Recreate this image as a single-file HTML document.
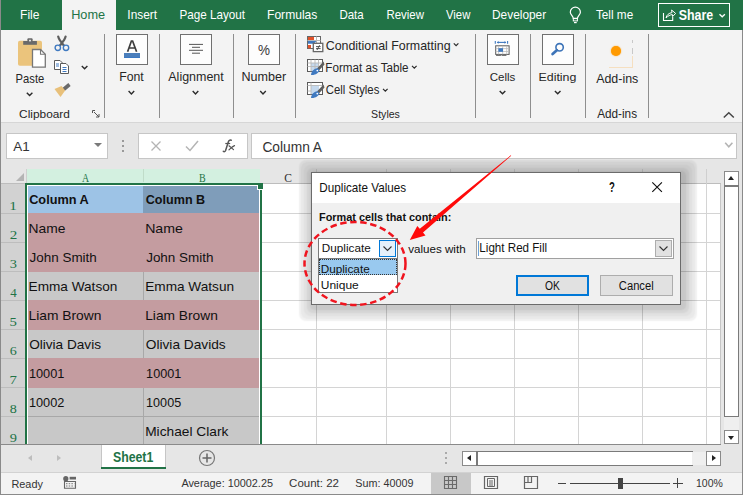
<!DOCTYPE html>
<html><head><meta charset="utf-8">
<style>
*{margin:0;padding:0;box-sizing:border-box}
html,body{width:743px;height:495px;overflow:hidden;background:#f3f3f3;font-family:"Liberation Sans",sans-serif;position:relative}
.a{position:absolute}
.t{position:absolute;white-space:nowrap;line-height:1}
.tab{color:#fff;font-size:13px;top:9px}
.rl{color:#262626;font-size:12.5px}
.box{position:absolute;border:1px solid #707070;background:#fdfdfd}
.sep{position:absolute;top:34px;height:84px;width:1px;background:#8e8e8e}
.chev{position:absolute;width:4px;height:4px;border-right:1.4px solid #2a2a2a;border-bottom:1.4px solid #2a2a2a;transform:rotate(45deg)}
.cell{position:absolute;font-size:12.6px;color:#111;white-space:nowrap;line-height:1}
.hl{position:absolute;background:#d4d4d4}
.vl{position:absolute;background:#d4d4d4}
.rn{position:absolute;color:#217346;font-family:"Liberation Serif",serif;font-size:13px;line-height:1;width:26px;text-align:center}
</style></head><body>
<!-- outer left border -->
<div class="a" style="left:0;top:0;width:1px;height:495px;background:#8a8a8a;z-index:50"></div>
<div class="a" style="left:0;top:494px;width:743px;height:1px;background:#8a8a8a;z-index:50"></div>

<!-- title / tabs bar -->
<div class="a" style="left:0;top:0;width:743px;height:30px;background:#217346"></div>
<div class="a" style="left:62px;top:0;width:54px;height:30px;background:#f3f3f3"></div>
<svg class="a" style="left:566px;top:4px" width="18" height="20" viewBox="0 0 18 20"><path d="M7.3 14.3 C7 12 4.3 10.5 4.3 8.2 A5.05 5.05 0 0 1 14.4 8.2 C14.4 10.5 11.7 12 11.4 14.3 Z" fill="none" stroke="#fff" stroke-width="1.2"/><rect x="7.3" y="14.6" width="4.1" height="2.3" fill="none" stroke="#fff" stroke-width="1"/><path d="M8 18.6 H10.7" stroke="#fff" stroke-width="1.2"/></svg>
<div class="a" style="left:658px;top:3px;width:72px;height:24px;border:1px solid #fff"></div>
<svg class="a" style="left:662px;top:7px" width="15" height="15" viewBox="0 0 15 15"><path d="M1.5 6 V13.5 H10.7 V10" fill="none" stroke="#fff" stroke-width="1.1"/><path d="M4 11 C4.5 8 7 6 10 5.6 L9.6 3 L13.6 6.4 L10.6 9.6 L10.4 7.6 C8 7.8 6 9 4 11 Z" fill="none" stroke="#fff" stroke-width="1"/></svg>
<svg class="a" style="left:716px;top:10px" width="12" height="10" viewBox="0 0 12 10"><path d="M3.5 4.2 L6.2 6.8 L8.9 4.2" fill="none" stroke="#fff" stroke-width="1.3"/></svg>

<!-- ribbon -->
<div class="a" style="left:0;top:30px;width:743px;height:92px;background:#f3f3f3"></div>
<div class="a" style="left:0;top:122px;width:743px;height:1px;background:#d6d6d6"></div>

<!-- clipboard -->
<svg class="a" style="left:12px;top:33px" width="40" height="40" viewBox="0 0 40 40"><rect x="6" y="7.8" width="24" height="25" rx="1.8" fill="#ebc47c"/><rect x="11.2" y="8" width="13.7" height="3.8" fill="#6a6a6a"/><rect x="15.4" y="5.3" width="5.2" height="4" rx="1" fill="#6a6a6a"/><rect x="17.2" y="6.8" width="1.6" height="1.6" fill="#fff"/><path d="M20.5 16.5 H28.5 L33.3 21.3 V34.2 H20.5 Z" fill="#fff" stroke="#777" stroke-width="1.3"/><path d="M28.5 16.5 V21.3 H33.3" fill="none" stroke="#777" stroke-width="1.1"/><path d="M18 8 V33" stroke="none"/></svg>
<svg class="a" style="left:23px;top:89px" width="12" height="10" viewBox="0 0 12 10"><path d="M3.80 3.80 L6.60 6.60 L9.40 3.80" fill="none" stroke="#2a2a2a" stroke-width="1.4"/></svg>
<svg class="a" style="left:50px;top:33px" width="24" height="67" viewBox="0 0 24 67"><path d="M8.2 3.6 C9 7 11 9 13.8 12.3 M15.6 3.6 C14.8 7 12.8 9 10 12.3" fill="none" stroke="#5e5e5e" stroke-width="2.2" stroke-linecap="round"/><circle cx="7.8" cy="14.8" r="2.7" fill="#f3f3f3" stroke="#3f79c0" stroke-width="1.4"/><circle cx="16" cy="14.8" r="2.7" fill="#f3f3f3" stroke="#3f79c0" stroke-width="1.4"/><path d="M4.5 27.5 H10 L12.5 30 V36.5 H4.5 Z" fill="#fff" stroke="#5a5a5a" stroke-width="1"/><path d="M6 31 H9 M6 33 H9" stroke="#3f79c0" stroke-width="1"/><path d="M10.5 30.5 H16 L18.5 33 V40.5 H10.5 Z" fill="#fff" stroke="#5a5a5a" stroke-width="1"/><path d="M12.5 34.5 H16.5 M12.5 36.5 H16.5 M12.5 38.5 H16.5" stroke="#3f79c0" stroke-width="1"/><path d="M12.35 55.12 L18.35 50.12 L20.65 52.88 L14.65 57.88 Z" fill="#6a6a6a"/><path d="M4.5 56 L11.5 53 L15.2 57.6 L10.5 64 Z" fill="#e8c07a"/></svg>

<svg class="a" style="left:78px;top:62px" width="12" height="10" viewBox="0 0 12 10"><path d="M3.80 4.00 L6.60 6.80 L9.40 4.00" fill="none" stroke="#2a2a2a" stroke-width="1.4"/></svg>

<svg class="a" style="left:92px;top:110px" width="8" height="8" viewBox="0 0 8 8"><path d="M0.5 0.5 H3 M0.5 0.5 V3 M2 2 L7 7 M7 4 V7 H4" fill="none" stroke="#555" stroke-width="1"/></svg>
<div class="sep" style="left:104px"></div>

<!-- font -->
<div class="box" style="left:116px;top:34px;width:32px;height:31px"></div>
<div class="a" style="left:124px;top:54px;width:16px;height:4px;background:#3a78c3"></div>
<svg class="a" style="left:125px;top:87px" width="12" height="10" viewBox="0 0 12 10"><path d="M3.60 4.10 L6.40 6.90 L9.20 4.10" fill="none" stroke="#2a2a2a" stroke-width="1.4"/></svg>
<div class="sep" style="left:159px"></div>

<!-- alignment -->
<div class="box" style="left:180px;top:34px;width:32px;height:31px"></div>
<svg class="a" style="left:188px;top:42px" width="16" height="14" viewBox="0 0 16 14"><path d="M1 2.4 H15 M4 5.3 H12 M1 8.3 H15 M4 11.2 H12" stroke="#555" stroke-width="1"/></svg>
<svg class="a" style="left:189px;top:87px" width="12" height="10" viewBox="0 0 12 10"><path d="M3.70 4.10 L6.50 6.90 L9.30 4.10" fill="none" stroke="#2a2a2a" stroke-width="1.4"/></svg>
<div class="sep" style="left:233px"></div>

<!-- number -->
<div class="box" style="left:248px;top:34px;width:32px;height:31px"></div>
<svg class="a" style="left:257px;top:87px" width="12" height="10" viewBox="0 0 12 10"><path d="M3.20 4.10 L6.00 6.90 L8.80 4.10" fill="none" stroke="#2a2a2a" stroke-width="1.4"/></svg>
<div class="sep" style="left:295px"></div>

<!-- styles -->
<svg class="a" style="left:304px;top:34px" width="22" height="20" viewBox="0 0 22 20"><rect x="3.5" y="2.5" width="13" height="12" fill="#fff" stroke="#666" stroke-width="1"/><path d="M12.5 2.5 V9 M3.5 6.5 H16.5" stroke="#b8b8b8" stroke-width="1"/><rect x="4" y="3" width="6" height="3" fill="#e2522a"/><path d="M4 7 H12.5 L10 9.8 H4 Z" fill="#3f79c0"/><rect x="4" y="11" width="3" height="3.3" fill="#e2522a"/><rect x="9.3" y="9.3" width="9.5" height="8.3" fill="#fff" stroke="#666" stroke-width="1.3"/><path d="M12 12.6 H16.6 M12 14.6 H16.6 M15.6 11.2 L13 16" stroke="#444" stroke-width="0.9"/></svg>
<svg class="a" style="left:450px;top:39px" width="12" height="10" viewBox="0 0 12 10"><path d="M3.80 4.35 L6.10 6.65 L8.40 4.35" fill="none" stroke="#2a2a2a" stroke-width="1.2"/></svg>
<svg class="a" style="left:304px;top:56px" width="22" height="20" viewBox="0 0 22 20"><rect x="3.5" y="3.5" width="15" height="12" fill="#fff" stroke="#5a5a5a" stroke-width="1"/><rect x="7" y="7" width="7" height="8" fill="#c5d9ee"/><path d="M7 3.5 V15.5 M11 3.5 V15.5 M14.5 3.5 V12 M3.5 7 H18.5 M3.5 10.5 H16" stroke="#b8b8b8" stroke-width="0.9"/><path d="M19.5 5.5 L20.5 8.5 L15 14.5 L13 12.5 Z" fill="#5e5e5e"/><path d="M7 19 C7 16 10 12 13.5 12.2 L15.5 14.3 C15 17 11 19.5 7 19 Z" fill="#3f79c0"/><circle cx="13.3" cy="14.6" r="0.9" fill="#fff"/></svg>
<svg class="a" style="left:408px;top:62px" width="12" height="10" viewBox="0 0 12 10"><path d="M4.00 3.85 L6.30 6.15 L8.60 3.85" fill="none" stroke="#2a2a2a" stroke-width="1.2"/></svg>
<svg class="a" style="left:304px;top:79px" width="22" height="20" viewBox="0 0 22 20"><rect x="3.5" y="3.5" width="15" height="12" fill="#fff" stroke="#5a5a5a" stroke-width="1"/><rect x="7" y="6.5" width="8" height="8.5" fill="#c5d9ee"/><path d="M7 3.5 V15.5 M3.5 6.5 H18.5 M3.5 12 H7" stroke="#b8b8b8" stroke-width="0.9"/><path d="M19.5 5.5 L20.5 8.5 L15 14.5 L13 12.5 Z" fill="#5e5e5e"/><path d="M7 19 C7 16 10 12 13.5 12.2 L15.5 14.3 C15 17 11 19.5 7 19 Z" fill="#3f79c0"/><circle cx="13.3" cy="14.6" r="0.9" fill="#fff"/></svg>
<svg class="a" style="left:379px;top:85px" width="12" height="10" viewBox="0 0 12 10"><path d="M4.00 3.85 L6.30 6.15 L8.60 3.85" fill="none" stroke="#2a2a2a" stroke-width="1.2"/></svg>
<div class="sep" style="left:475px"></div>

<!-- cells -->
<div class="box" style="left:487px;top:34px;width:32px;height:31px"></div>
<svg class="a" style="left:490px;top:38px" width="24" height="22" viewBox="0 0 24 22"><path d="M5.3 3 V5.8 M17.6 3 V5.8" stroke="#3f79c0" stroke-width="1.1"/><path d="M7.3 4.4 H15.8" stroke="#3f79c0" stroke-width="1.1"/><path d="M6.8 4.4 L8.6 3 V5.8 Z M16.3 4.4 L14.5 3 V5.8 Z" fill="#3f79c0"/><rect x="5.7" y="7.8" width="13.4" height="8.6" fill="#fff" stroke="#5a5a5a" stroke-width="1"/><path d="M8.6 7.8 V16.4 M12.7 7.8 V16.4 M16.7 7.8 V16.4 M5.7 10.6 H19.1 M5.7 13.5 H19.1" stroke="#bdbdbd" stroke-width="0.8"/><rect x="8.4" y="10.2" width="4.6" height="3.6" fill="#3f79c0"/><path d="M6.5 17.3 H10.5 M12 17.3 H16" stroke="#777" stroke-width="1.2" stroke-linecap="round"/></svg>
<svg class="a" style="left:496px;top:87px" width="12" height="10" viewBox="0 0 12 10"><path d="M3.70 4.00 L6.50 6.80 L9.30 4.00" fill="none" stroke="#2a2a2a" stroke-width="1.4"/></svg>
<div class="sep" style="left:530px"></div>

<!-- editing -->
<div class="box" style="left:542px;top:34px;width:32px;height:31px"></div>
<svg class="a" style="left:549px;top:41px" width="18" height="18" viewBox="0 0 18 18"><circle cx="10.6" cy="6.3" r="3.7" fill="none" stroke="#3d74b8" stroke-width="1.6"/><path d="M7.8 9.3 L3.6 13" stroke="#3d74b8" stroke-width="2.8" stroke-linecap="round"/></svg>
<svg class="a" style="left:551px;top:87px" width="12" height="10" viewBox="0 0 12 10"><path d="M3.90 4.00 L6.70 6.80 L9.50 4.00" fill="none" stroke="#2a2a2a" stroke-width="1.4"/></svg>
<div class="sep" style="left:585px"></div>

<!-- add-ins -->
<div class="a" style="left:610.8px;top:45.8px;width:10.4px;height:10.4px;border-radius:50%;background:#ff9a00;box-shadow:0 0 1.5px #ffa726"></div><div class="a" style="left:632px;top:39.5px;width:1px;height:3.5px;background:#c8c8c8"></div><div class="a" style="left:632px;top:48px;width:1px;height:6px;background:#c8c8c8"></div><div class="a" style="left:632px;top:56px;width:1px;height:12px;background:#f5dfc0"></div><div class="a" style="left:609px;top:67px;width:24px;height:1px;background:#f5dfc0"></div>
<div class="sep" style="left:648px"></div>
<svg class="a" style="left:720px;top:108px" width="18" height="14" viewBox="0 0 18 14"><path d="M3.8 9.5 L8.8 4.8 L13.8 9.5" fill="none" stroke="#444" stroke-width="1.5"/></svg>

<!-- formula bar area -->
<div class="a" style="left:1px;top:123px;width:742px;height:46px;background:#e6e6e6"></div>
<div class="a" style="left:6px;top:133px;width:102px;height:26px;background:#fff;border:1px solid #c6c6c6"></div>
<div class="a" style="left:93.5px;top:143px;width:0;height:0;border-left:4px solid transparent;border-right:4px solid transparent;border-top:4.5px solid #7a7a7a"></div>
<div class="a" style="left:122px;top:140px;width:2px;height:2px;background:#999"></div>
<div class="a" style="left:122px;top:145px;width:2px;height:2px;background:#999"></div>
<div class="a" style="left:122px;top:150px;width:2px;height:2px;background:#999"></div>
<div class="a" style="left:138px;top:133px;width:110px;height:26px;background:#fff;border:1px solid #c6c6c6"></div>
<svg class="a" style="left:150px;top:140px" width="12" height="12" viewBox="0 0 12 12"><path d="M1.5 1.5 L10.5 10.5 M10.5 1.5 L1.5 10.5" stroke="#b4b4b4" stroke-width="1.3"/></svg>
<svg class="a" style="left:185px;top:140px" width="14" height="12" viewBox="0 0 14 12"><path d="M1 6.5 L5 10.5 L13 1" fill="none" stroke="#b4b4b4" stroke-width="1.5"/></svg>
<div class="a" style="left:251px;top:133px;width:486px;height:26px;background:#fff;border:1px solid #c6c6c6"></div>
<svg class="a" style="left:720px;top:138px" width="18" height="14" viewBox="0 0 18 14"><path d="M5.2 4.8 L8.8 8.8 L12.4 4.8" fill="none" stroke="#b4b4b4" stroke-width="1.6"/></svg>

<!-- column header row -->
<div class="a" style="left:1px;top:169px;width:720px;height:15px;background:#e6e6e6"></div>
<div class="a" style="left:27px;top:169px;width:233px;height:15px;background:#d3f0e0"></div>
<div class="a" style="left:1px;top:183px;width:720px;height:1px;background:#bdbdbd"></div>
<div class="a" style="left:25px;top:183px;width:237px;height:2px;background:#217346;z-index:1"></div>
<div class="a" style="left:16px;top:173px;width:0;height:0;border-left:8px solid transparent;border-bottom:8px solid #b4b4b4"></div>
<div class="a" style="left:26px;top:169px;width:1px;height:15px;background:#cfcfcf"></div>
<div class="a" style="left:143px;top:169px;width:1px;height:13px;background:#c0dcc9"></div>
<div class="a" style="left:316px;top:169px;width:1px;height:15px;background:#cfcfcf"></div>
<div class="a" style="left:386px;top:169px;width:1px;height:15px;background:#cfcfcf"></div>
<div class="a" style="left:450px;top:169px;width:1px;height:15px;background:#cfcfcf"></div>
<div class="a" style="left:514px;top:169px;width:1px;height:15px;background:#cfcfcf"></div>
<div class="a" style="left:578px;top:169px;width:1px;height:15px;background:#cfcfcf"></div>
<div class="a" style="left:642px;top:169px;width:1px;height:15px;background:#cfcfcf"></div>
<div class="a" style="left:706px;top:169px;width:1px;height:15px;background:#cfcfcf"></div>

<!-- grid -->
<div class="a" style="left:1px;top:184px;width:26px;height:260px;background:#d2d2d2"></div>
<div class="a" style="left:27px;top:184px;width:694px;height:260px;background:#fff"></div>
<!-- gridlines -->
<div class="hl" style="left:261px;top:213px;width:460px;height:1px"></div>
<div class="hl" style="left:261px;top:242px;width:460px;height:1px"></div>
<div class="hl" style="left:261px;top:271px;width:460px;height:1px"></div>
<div class="hl" style="left:261px;top:300px;width:460px;height:1px"></div>
<div class="hl" style="left:261px;top:329px;width:460px;height:1px"></div>
<div class="hl" style="left:261px;top:358px;width:460px;height:1px"></div>
<div class="hl" style="left:261px;top:387px;width:460px;height:1px"></div>
<div class="hl" style="left:261px;top:416px;width:460px;height:1px"></div>
<div class="hl" style="left:261px;top:445px;width:460px;height:1px"></div>
<div class="a" style="left:1px;top:213px;width:26px;height:1px;background:#bdbdbd"></div>
<div class="a" style="left:1px;top:242px;width:26px;height:1px;background:#bdbdbd"></div>
<div class="a" style="left:1px;top:271px;width:26px;height:1px;background:#bdbdbd"></div>
<div class="a" style="left:1px;top:300px;width:26px;height:1px;background:#bdbdbd"></div>
<div class="a" style="left:1px;top:329px;width:26px;height:1px;background:#bdbdbd"></div>
<div class="a" style="left:1px;top:358px;width:26px;height:1px;background:#bdbdbd"></div>
<div class="a" style="left:1px;top:387px;width:26px;height:1px;background:#bdbdbd"></div>
<div class="a" style="left:1px;top:416px;width:26px;height:1px;background:#bdbdbd"></div>
<div class="a" style="left:1px;top:445px;width:26px;height:1px;background:#bdbdbd"></div>
<div class="vl" style="left:316px;top:184px;width:1px;height:260px"></div>
<div class="vl" style="left:386px;top:184px;width:1px;height:260px"></div>
<div class="vl" style="left:450px;top:184px;width:1px;height:260px"></div>
<div class="vl" style="left:514px;top:184px;width:1px;height:260px"></div>
<div class="vl" style="left:578px;top:184px;width:1px;height:260px"></div>
<div class="vl" style="left:642px;top:184px;width:1px;height:260px"></div>
<div class="vl" style="left:706px;top:184px;width:1px;height:260px"></div>
<div class="a" style="left:27px;top:184px;width:116px;height:29px;background:#9dc3e6"></div>
<div class="a" style="left:143px;top:184px;width:118px;height:29px;background:#7f9dba"></div>
<div class="a" style="left:27px;top:213px;width:116px;height:30px;background:#c49ca0"></div>
<div class="a" style="left:143px;top:213px;width:118px;height:30px;background:#c49ca0"></div>
<div class="a" style="left:27px;top:242px;width:116px;height:30px;background:#c49ca0"></div>
<div class="a" style="left:143px;top:242px;width:118px;height:30px;background:#c49ca0"></div>
<div class="a" style="left:27px;top:272px;width:116px;height:28px;background:#c8c8c8"></div>
<div class="a" style="left:143px;top:272px;width:118px;height:28px;background:#c8c8c8"></div>
<div class="a" style="left:27px;top:300px;width:116px;height:30px;background:#c49ca0"></div>
<div class="a" style="left:143px;top:300px;width:118px;height:30px;background:#c49ca0"></div>
<div class="a" style="left:27px;top:330px;width:116px;height:28px;background:#c8c8c8"></div>
<div class="a" style="left:143px;top:330px;width:118px;height:28px;background:#c8c8c8"></div>
<div class="a" style="left:27px;top:358px;width:116px;height:30px;background:#c49ca0"></div>
<div class="a" style="left:143px;top:358px;width:118px;height:30px;background:#c49ca0"></div>
<div class="a" style="left:27px;top:388px;width:116px;height:28px;background:#c8c8c8"></div>
<div class="a" style="left:143px;top:388px;width:118px;height:28px;background:#c8c8c8"></div>
<div class="a" style="left:27px;top:417px;width:116px;height:27px;background:#c8c8c8"></div>
<div class="a" style="left:143px;top:417px;width:118px;height:27px;background:#c8c8c8"></div>
<div class="a" style="left:143px;top:272px;width:1px;height:28px;background:#a8a8a8"></div>
<div class="a" style="left:143px;top:330px;width:1px;height:28px;background:#a8a8a8"></div>
<div class="a" style="left:143px;top:388px;width:1px;height:56px;background:#a8a8a8"></div>

<div class="a" style="left:27px;top:416px;width:233px;height:1px;background:#a8a8a8"></div>
<div class="a" style="left:25px;top:183px;width:2px;height:261px;background:#217346"></div><div class="a" style="left:27px;top:185px;width:1px;height:259px;background:#fff"></div>
<div class="a" style="left:259px;top:185px;width:1px;height:259px;background:#fff"></div><div class="a" style="left:260px;top:190px;width:2px;height:254px;background:#217346"></div>
<div class="a" style="left:27px;top:185px;width:233px;height:1px;background:#fff"></div>
<div class="a" style="left:257px;top:185px;width:7px;height:5px;background:#fff;z-index:1"></div><div class="a" style="left:258px;top:183px;width:5px;height:6px;background:#217346;z-index:1"></div>

<!-- vertical scrollbar -->
<div class="a" style="left:721px;top:169px;width:22px;height:275px;background:#e6e6e6"></div>
<div class="a" style="left:720px;top:184px;width:1px;height:260px;background:#c6c6c6"></div>
<div class="a" style="left:724px;top:171px;width:15px;height:15px;background:#fff;border:1px solid #8a8a8a"></div>
<div class="a" style="left:728px;top:176px;width:0;height:0;border-left:3.5px solid transparent;border-right:3.5px solid transparent;border-bottom:4px solid #222"></div>
<div class="a" style="left:724px;top:185px;width:15px;height:232px;background:#fff;border:1px solid #7a7a7a;border-top-width:2px"></div>
<div class="a" style="left:724px;top:430px;width:15px;height:14px;background:#fff;border:1px solid #8a8a8a"></div>
<div class="a" style="left:728px;top:436px;width:0;height:0;border-left:3.5px solid transparent;border-right:3.5px solid transparent;border-top:4px solid #222"></div>
<div class="a" style="left:742px;top:30px;width:1px;height:465px;background:#8a8a8a;z-index:50"></div>

<!-- sheet tab bar -->
<div class="a" style="left:1px;top:444px;width:742px;height:28px;background:#e6e6e6"></div>
<div class="a" style="left:1px;top:444px;width:720px;height:1px;background:#8a8a8a"></div>
<div class="a" style="left:28px;top:454.5px;width:0;height:0;border-top:3.5px solid transparent;border-bottom:3.5px solid transparent;border-right:4px solid #bdbdbd"></div>
<div class="a" style="left:57px;top:454.5px;width:0;height:0;border-top:3.5px solid transparent;border-bottom:3.5px solid transparent;border-left:4px solid #bdbdbd"></div>
<div class="a" style="left:101px;top:445px;width:65px;height:24px;background:#fff;border-left:1px solid #c6c6c6;border-right:1px solid #c6c6c6"></div>
<div class="a" style="left:101px;top:467px;width:65px;height:2px;background:#217346"></div>
<svg class="a" style="left:198px;top:449px" width="18" height="18" viewBox="0 0 18 18"><circle cx="9" cy="9" r="7.5" fill="none" stroke="#777" stroke-width="1.2"/><path d="M9 4.5 V13.5 M4.5 9 H13.5" stroke="#666" stroke-width="1.5"/></svg>
<div class="a" style="left:445px;top:452px;width:2px;height:2px;background:#aaa"></div>
<div class="a" style="left:445px;top:457px;width:2px;height:2px;background:#aaa"></div>
<div class="a" style="left:445px;top:462px;width:2px;height:2px;background:#aaa"></div>
<div class="a" style="left:462px;top:451px;width:15px;height:15px;background:#fff;border:1px solid #8a8a8a"></div>
<div class="a" style="left:467px;top:455px;width:0;height:0;border-top:3.5px solid transparent;border-bottom:3.5px solid transparent;border-right:4.5px solid #222"></div>
<div class="a" style="left:476px;top:451px;width:217px;height:15px;background:#fff;border:1px solid #7a7a7a;border-left-width:2px"></div>
<div class="a" style="left:692px;top:452px;width:14px;height:13px;background:#efefef"></div><div class="a" style="left:724px;top:417px;width:15px;height:13px;background:#efefef"></div><div class="a" style="left:706px;top:451px;width:15px;height:15px;background:#fff;border:1px solid #8a8a8a"></div>
<div class="a" style="left:711.5px;top:455px;width:0;height:0;border-top:3.5px solid transparent;border-bottom:3.5px solid transparent;border-left:4.5px solid #222"></div>

<!-- status bar -->
<div class="a" style="left:1px;top:472px;width:742px;height:23px;background:#f3f3f3;border-top:1px solid #d2d2d2"></div>
<svg class="a" style="left:62px;top:474px" width="16" height="16" viewBox="0 0 16 16"><circle cx="3.8" cy="4.7" r="2.6" fill="#666"/><rect x="7.6" y="2.8" width="6.4" height="2.7" fill="#666"/><path d="M2.5 7.5 H13.5 V14.2 H2.5 Z" fill="none" stroke="#666" stroke-width="1.1"/><path d="M4 9.7 H12.5 M4 12 H12.5" stroke="#777" stroke-width="1" stroke-dasharray="1.5 1.2"/></svg>
<div class="a" style="left:431px;top:473px;width:40px;height:21px;background:#c8c8c8"></div>
<svg class="a" style="left:443px;top:475px" width="15" height="15" viewBox="0 0 15 15"><path d="M1.5 1.5 H13.5 V13.5 H1.5 Z M1.5 5.5 H13.5 M1.5 9.5 H13.5 M5.5 1.5 V13.5 M9.5 1.5 V13.5" fill="none" stroke="#6a6a6a" stroke-width="1.1"/></svg>
<svg class="a" style="left:483px;top:475px" width="16" height="15" viewBox="0 0 16 15"><path d="M1.5 1.5 H14.5 V13.5 H1.5 Z" fill="none" stroke="#666" stroke-width="1.2"/><path d="M4.5 3.5 H11.5 V11.5 H4.5 Z M6 6 H10 M6 8 H10 M6 10 H10" fill="none" stroke="#666" stroke-width="1"/></svg>
<svg class="a" style="left:523px;top:475px" width="16" height="15" viewBox="0 0 16 15"><path d="M1.5 1.5 H14.5 V13.5 H1.5 Z M1.5 7.5 H8.5 V1.5 M5 1.5 V7.5" fill="none" stroke="#666" stroke-width="1.2"/></svg>
<div class="a" style="left:558px;top:483px;width:8px;height:1px;background:#444"></div>
<div class="a" style="left:570px;top:483px;width:100px;height:1px;background:#444"></div>
<div class="a" style="left:618px;top:478px;width:5px;height:11px;background:#444"></div>
<div class="a" style="left:673px;top:483px;width:10px;height:1px;background:#444"></div>
<div class="a" style="left:677px;top:478px;width:1px;height:10px;background:#444"></div>


<svg class="a" style="left:116px;top:34px;z-index:2" width="32" height="31" viewBox="0 0 32 31"><path d="M11.6 17.8 L15.4 7 H16.6 L20.6 17.8 M13.2 14 H19" fill="none" stroke="#3d3d3d" stroke-width="1.7"/><rect x="8" y="19" width="16" height="4" fill="#4a7ebb"/></svg>
<svg class="a" style="left:248px;top:34px;z-index:2" width="32" height="31" viewBox="0 0 32 31"><text x="16" y="21" font-family="Liberation Sans" font-size="15" fill="#3a3a3a" text-anchor="middle" textLength="12" lengthAdjust="spacingAndGlyphs">%</text></svg>
<svg class="a" style="left:215px;top:135px;z-index:2" width="30" height="23" viewBox="0 0 30 23"><path d="M8.3 16.3 C9 17 10 16.8 10.6 15.5 L13.3 7 C13.8 5.3 14.8 4.8 16.2 5.3" fill="none" stroke="#555" stroke-width="1.5" stroke-linecap="round"/><path d="M10.3 8.5 H15.2" stroke="#555" stroke-width="1.2"/><path d="M14 10.8 L18.5 14.6 M19.5 10.6 C17.5 11.5 16 13 14 14.8" fill="none" stroke="#555" stroke-width="1.2" stroke-linecap="round"/></svg>
<svg class="a" style="left:0;top:0;z-index:1" width="743" height="495" viewBox="0 0 743 495">
<text x="20.04" y="19.00" font-size="12.32" font-family="Liberation Sans" fill="#ffffff" textLength="19.40" lengthAdjust="spacingAndGlyphs">File</text>
<text x="71.18" y="19.00" font-size="12.17" font-family="Liberation Sans" fill="#217346" textLength="33.98" lengthAdjust="spacingAndGlyphs">Home</text>
<text x="127.33" y="19.30" font-size="12.46" font-family="Liberation Sans" fill="#ffffff" textLength="29.74" lengthAdjust="spacingAndGlyphs">Insert</text>
<text x="179.47" y="19.30" font-size="12.46" font-family="Liberation Sans" fill="#ffffff" textLength="65.61" lengthAdjust="spacingAndGlyphs">Page Layout</text>
<text x="267.03" y="19.30" font-size="12.46" font-family="Liberation Sans" fill="#ffffff" textLength="50.33" lengthAdjust="spacingAndGlyphs">Formulas</text>
<text x="339.38" y="19.30" font-size="12.46" font-family="Liberation Sans" fill="#ffffff" textLength="24.28" lengthAdjust="spacingAndGlyphs">Data</text>
<text x="386.38" y="19.30" font-size="12.46" font-family="Liberation Sans" fill="#ffffff" textLength="37.53" lengthAdjust="spacingAndGlyphs">Review</text>
<text x="446.00" y="19.30" font-size="12.46" font-family="Liberation Sans" fill="#ffffff" textLength="24.31" lengthAdjust="spacingAndGlyphs">View</text>
<text x="492.05" y="19.30" font-size="12.46" font-family="Liberation Sans" fill="#ffffff" textLength="54.10" lengthAdjust="spacingAndGlyphs">Developer</text>
<text x="595.96" y="19.00" font-size="12.61" font-family="Liberation Sans" fill="#ffffff" textLength="37.26" lengthAdjust="spacingAndGlyphs">Tell me</text>
<text x="678.75" y="20.00" font-size="13.86" font-family="Liberation Sans" font-weight="bold" fill="#ffffff" textLength="34.47" lengthAdjust="spacingAndGlyphs">Share</text>
<text x="15.60" y="82.90" font-size="12.32" font-family="Liberation Sans" fill="#262626" textLength="28.70" lengthAdjust="spacingAndGlyphs">Paste</text>
<text x="19.11" y="117.80" font-size="11.30" font-family="Liberation Sans" fill="#262626" textLength="50.76" lengthAdjust="spacingAndGlyphs">Clipboard</text>
<text x="119.22" y="81.00" font-size="12.61" font-family="Liberation Sans" fill="#262626" textLength="24.56" lengthAdjust="spacingAndGlyphs">Font</text>
<text x="168.30" y="81.00" font-size="12.61" font-family="Liberation Sans" fill="#262626" textLength="55.47" lengthAdjust="spacingAndGlyphs">Alignment</text>
<text x="241.50" y="81.00" font-size="12.61" font-family="Liberation Sans" fill="#262626" textLength="44.67" lengthAdjust="spacingAndGlyphs">Number</text>
<text x="325.68" y="49.60" font-size="13.19" font-family="Liberation Sans" fill="#262626" textLength="124.92" lengthAdjust="spacingAndGlyphs">Conditional Formatting</text>
<text x="325.37" y="72.00" font-size="12.61" font-family="Liberation Sans" fill="#262626" textLength="83.25" lengthAdjust="spacingAndGlyphs">Format as Table</text>
<text x="325.73" y="94.30" font-size="13.04" font-family="Liberation Sans" fill="#262626" textLength="53.61" lengthAdjust="spacingAndGlyphs">Cell Styles</text>
<text x="371.08" y="117.80" font-size="11.30" font-family="Liberation Sans" fill="#262626" textLength="28.84" lengthAdjust="spacingAndGlyphs">Styles</text>
<text x="489.72" y="80.90" font-size="11.59" font-family="Liberation Sans" fill="#262626" textLength="25.62" lengthAdjust="spacingAndGlyphs">Cells</text>
<text x="538.51" y="80.90" font-size="11.59" font-family="Liberation Sans" fill="#262626" textLength="37.89" lengthAdjust="spacingAndGlyphs">Editing</text>
<text x="596.20" y="83.20" font-size="12.32" font-family="Liberation Sans" fill="#262626" textLength="42.07" lengthAdjust="spacingAndGlyphs">Add-ins</text>
<text x="597.20" y="118.00" font-size="11.88" font-family="Liberation Sans" fill="#262626" textLength="39.85" lengthAdjust="spacingAndGlyphs">Add-ins</text>
<text x="13.20" y="150.90" font-size="13.48" font-family="Liberation Sans" fill="#333333" textLength="16.42" lengthAdjust="spacingAndGlyphs">A1</text>
<text x="262.42" y="151.50" font-size="14.06" font-family="Liberation Sans" fill="#333333" textLength="59.64" lengthAdjust="spacingAndGlyphs">Column A</text>
<text x="81.90" y="181.80" font-size="13.18" font-family="Liberation Serif" fill="#217346" textLength="7.12" lengthAdjust="spacingAndGlyphs">A</text>
<text x="199.00" y="181.80" font-size="13.38" font-family="Liberation Serif" fill="#217346" textLength="6.67" lengthAdjust="spacingAndGlyphs">B</text>
<text x="284.24" y="181.80" font-size="13.18" font-family="Liberation Serif" fill="#333333" textLength="7.70" lengthAdjust="spacingAndGlyphs">C</text>
<text x="29.20" y="203.60" font-size="12.86" font-family="Liberation Sans" font-weight="bold" fill="#111111" textLength="59.58" lengthAdjust="spacingAndGlyphs">Column A</text>
<text x="145.80" y="203.60" font-size="12.86" font-family="Liberation Sans" font-weight="bold" fill="#111111" textLength="59.33" lengthAdjust="spacingAndGlyphs">Column B</text>
<text x="28.59" y="232.60" font-size="11.88" font-family="Liberation Sans" fill="#111111" textLength="36.91" lengthAdjust="spacingAndGlyphs">Name</text>
<text x="145.17" y="232.60" font-size="11.88" font-family="Liberation Sans" fill="#111111" textLength="37.74" lengthAdjust="spacingAndGlyphs">Name</text>
<text x="29.57" y="261.60" font-size="11.88" font-family="Liberation Sans" fill="#111111" textLength="67.19" lengthAdjust="spacingAndGlyphs">John Smith</text>
<text x="146.17" y="261.60" font-size="11.88" font-family="Liberation Sans" fill="#111111" textLength="67.29" lengthAdjust="spacingAndGlyphs">John Smith</text>
<text x="28.61" y="290.60" font-size="11.88" font-family="Liberation Sans" fill="#111111" textLength="88.75" lengthAdjust="spacingAndGlyphs">Emma Watson</text>
<text x="145.21" y="290.60" font-size="11.88" font-family="Liberation Sans" fill="#111111" textLength="88.86" lengthAdjust="spacingAndGlyphs">Emma Watsun</text>
<text x="28.60" y="319.60" font-size="11.88" font-family="Liberation Sans" fill="#111111" textLength="72.78" lengthAdjust="spacingAndGlyphs">Liam Brown</text>
<text x="145.20" y="319.60" font-size="11.88" font-family="Liberation Sans" fill="#111111" textLength="72.67" lengthAdjust="spacingAndGlyphs">Liam Brown</text>
<text x="29.16" y="348.60" font-size="11.88" font-family="Liberation Sans" fill="#111111" textLength="71.85" lengthAdjust="spacingAndGlyphs">Olivia Davis</text>
<text x="145.75" y="348.60" font-size="11.88" font-family="Liberation Sans" fill="#111111" textLength="79.96" lengthAdjust="spacingAndGlyphs">Olivia Davids</text>
<text x="28.91" y="377.60" font-size="11.88" font-family="Liberation Sans" fill="#111111" textLength="35.48" lengthAdjust="spacingAndGlyphs">10001</text>
<text x="146.11" y="377.60" font-size="11.88" font-family="Liberation Sans" fill="#111111" textLength="35.17" lengthAdjust="spacingAndGlyphs">10001</text>
<text x="28.91" y="406.60" font-size="11.88" font-family="Liberation Sans" fill="#111111" textLength="35.48" lengthAdjust="spacingAndGlyphs">10002</text>
<text x="146.12" y="406.60" font-size="11.88" font-family="Liberation Sans" fill="#111111" textLength="35.04" lengthAdjust="spacingAndGlyphs">10005</text>
<text x="145.20" y="435.60" font-size="11.88" font-family="Liberation Sans" fill="#111111" textLength="83.16" lengthAdjust="spacingAndGlyphs">Michael Clark</text>
<text x="9.28" y="210.00" font-size="13.03" font-family="Liberation Serif" fill="#217346" textLength="7.64" lengthAdjust="spacingAndGlyphs">1</text>
<text x="9.70" y="239.00" font-size="13.03" font-family="Liberation Serif" fill="#217346" textLength="7.56" lengthAdjust="spacingAndGlyphs">2</text>
<text x="9.72" y="268.00" font-size="13.03" font-family="Liberation Serif" fill="#217346" textLength="7.21" lengthAdjust="spacingAndGlyphs">3</text>
<text x="10.17" y="297.00" font-size="13.23" font-family="Liberation Serif" fill="#217346" textLength="6.46" lengthAdjust="spacingAndGlyphs">4</text>
<text x="9.56" y="326.00" font-size="13.23" font-family="Liberation Serif" fill="#217346" textLength="7.38" lengthAdjust="spacingAndGlyphs">5</text>
<text x="9.74" y="355.00" font-size="13.03" font-family="Liberation Serif" fill="#217346" textLength="7.05" lengthAdjust="spacingAndGlyphs">6</text>
<text x="9.41" y="384.00" font-size="13.23" font-family="Liberation Serif" fill="#217346" textLength="7.38" lengthAdjust="spacingAndGlyphs">7</text>
<text x="9.88" y="413.00" font-size="13.03" font-family="Liberation Serif" fill="#217346" textLength="7.05" lengthAdjust="spacingAndGlyphs">8</text>
<text x="9.87" y="442.00" font-size="13.03" font-family="Liberation Serif" fill="#217346" textLength="7.21" lengthAdjust="spacingAndGlyphs">9</text>
<text x="112.95" y="461.90" font-size="14.00" font-family="Liberation Sans" font-weight="bold" fill="#217346" textLength="40.37" lengthAdjust="spacingAndGlyphs">Sheet1</text>
<text x="11.43" y="487.60" font-size="10.14" font-family="Liberation Sans" fill="#333333" textLength="31.47" lengthAdjust="spacingAndGlyphs">Ready</text>
<text x="181.40" y="487.10" font-size="11.16" font-family="Liberation Sans" fill="#333333" textLength="91.59" lengthAdjust="spacingAndGlyphs">Average: 10002.25</text>
<text x="289.12" y="486.90" font-size="11.16" font-family="Liberation Sans" fill="#333333" textLength="49.91" lengthAdjust="spacingAndGlyphs">Count: 22</text>
<text x="355.27" y="486.90" font-size="11.16" font-family="Liberation Sans" fill="#333333" textLength="58.13" lengthAdjust="spacingAndGlyphs">Sum: 40009</text>
<text x="695.97" y="486.60" font-size="10.43" font-family="Liberation Sans" fill="#333333" textLength="26.84" lengthAdjust="spacingAndGlyphs">100%</text>
</svg>
<!-- dialog shadow -->
<div class="a" style="left:311px;top:172px;width:370px;height:133px;border-radius:2px;box-shadow:2px 2px 1.5px 3px rgba(0,0,0,.054),2px 2px 1.5px 6px rgba(0,0,0,.051),2px 2px 1.5px 9px rgba(0,0,0,.033),2px 2px 1.5px 11.5px rgba(0,0,0,.032),2px 2px 1.5px 14px rgba(0,0,0,.06)"></div>
<!-- dialog -->
<div class="a" style="left:311px;top:172px;width:370px;height:133px;background:#f0f0f0;border:1px solid #6b6b6b"></div>
<div class="a" style="left:312px;top:173px;width:368px;height:30px;background:#fff"></div>
<svg class="a" style="left:651px;top:181px" width="12" height="12" viewBox="0 0 12 12"><path d="M1.3 1.3 L10.9 10.9 M10.9 1.3 L1.3 10.9" stroke="#111" stroke-width="1.15"/></svg>
<div class="a" style="left:318px;top:238px;width:80px;height:21px;background:#fff;border:1px solid #7a7a7a"></div>
<div class="a" style="left:379px;top:240px;width:17px;height:17px;background:#e5f1fb;border:1px solid #0078d7"></div>
<svg class="a" style="left:379px;top:240px" width="17" height="17" viewBox="0 0 17 17"><path d="M4.5 6.5 L8.5 10.5 L12.5 6.5" fill="none" stroke="#333" stroke-width="1.1"/></svg>
<div class="a" style="left:318px;top:258px;width:80px;height:35px;background:#fff;border:1px solid #7a7a7a"></div>
<div class="a" style="left:319px;top:259px;width:78px;height:16px;background:#99c9ef;border:1px dotted #333"></div>
<div class="a" style="left:476px;top:238px;width:198px;height:21px;background:#fff;border:1px solid #a0a0a0"></div>
<div class="a" style="left:478px;top:241px;width:1px;height:15px;background:#6aa0d8"></div>
<div class="a" style="left:655px;top:240px;width:17px;height:17px;background:#e1e1e1;border:1px solid #adadad"></div>
<svg class="a" style="left:655px;top:240px" width="17" height="17" viewBox="0 0 17 17"><path d="M4.5 6.5 L8.5 10.5 L12.5 6.5" fill="none" stroke="#333" stroke-width="1.1"/></svg>
<div class="a" style="left:516px;top:275px;width:73px;height:21px;background:#e1e1e1;border:2px solid #0078d7"></div>
<div class="a" style="left:600px;top:275px;width:73px;height:21px;background:#e1e1e1;border:1px solid #adadad"></div>

<svg class="a" style="left:0;top:0;z-index:3" width="743" height="495" viewBox="0 0 743 495">
<text x="319.37" y="192.00" font-size="12.32" font-family="Liberation Sans" fill="#111111" textLength="86.78" lengthAdjust="spacingAndGlyphs">Duplicate Values</text>
<text x="319.05" y="220.80" font-size="11.57" font-family="Liberation Sans" font-weight="bold" fill="#111111" textLength="132.26" lengthAdjust="spacingAndGlyphs">Format cells that contain:</text>
<text x="321.86" y="251.50" font-size="11.30" font-family="Liberation Sans" fill="#111111" textLength="48.86" lengthAdjust="spacingAndGlyphs">Duplicate</text>
<text x="320.66" y="273.30" font-size="10.58" font-family="Liberation Sans" fill="#111111" textLength="49.07" lengthAdjust="spacingAndGlyphs">Duplicate</text>
<text x="320.76" y="289.00" font-size="10.43" font-family="Liberation Sans" fill="#111111" textLength="37.97" lengthAdjust="spacingAndGlyphs">Unique</text>
<text x="408.20" y="253.20" font-size="11.78" font-family="Liberation Sans" fill="#111111" textLength="57.45" lengthAdjust="spacingAndGlyphs">values with</text>
<text x="479.37" y="252.20" font-size="11.88" font-family="Liberation Sans" fill="#111111" textLength="67.75" lengthAdjust="spacingAndGlyphs">Light Red Fill</text>
<text x="545.09" y="290.10" font-size="12.61" font-family="Liberation Sans" fill="#111111" textLength="14.88" lengthAdjust="spacingAndGlyphs">OK</text>
<text x="618.84" y="290.10" font-size="12.61" font-family="Liberation Sans" fill="#111111" textLength="34.86" lengthAdjust="spacingAndGlyphs">Cancel</text>
<text x="609.12" y="191.90" font-size="13.94" font-family="Liberation Sans" font-weight="bold" fill="#111111" textLength="5.87" lengthAdjust="spacingAndGlyphs">?</text>
</svg>
<!-- annotations -->
<svg class="a" style="left:0;top:0;z-index:40" width="743" height="495" viewBox="0 0 743 495">
 <ellipse cx="355" cy="263.5" rx="50.5" ry="41.5" fill="none" stroke="#f0141e" stroke-width="2.5" stroke-dasharray="6.5 3.6"/>
 <path d="M409.8 240 L417.3 225.9 L419.8 228.8 L510.8 155.3 L511.2 155.7 L423 232.6 L425.5 235.5 Z" fill="#ff0a0a"/>
</svg>
</body></html>
